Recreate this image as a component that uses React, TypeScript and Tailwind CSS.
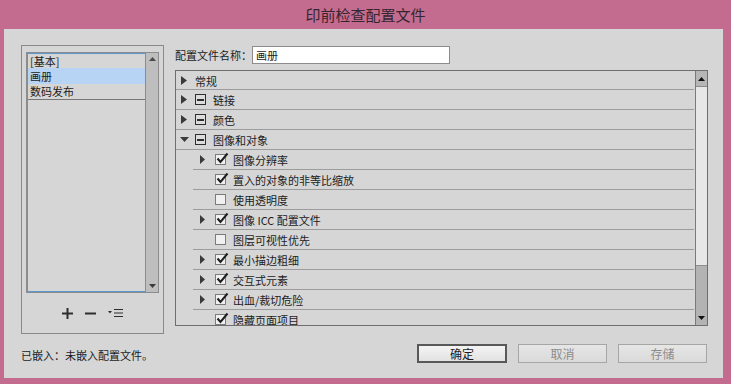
import React from "react";

const RightTri = ({ w = 6, h = 9 }: { w?: number; h?: number }) => (
  <svg width={w} height={h} viewBox={`0 0 ${w} ${h}`}>
    <polygon points={`0,0 ${w},${h / 2} 0,${h}`} fill="#3a3a3a" />
  </svg>
);

const DownTri = () => (
  <svg width={9} height={5} viewBox="0 0 9 5">
    <polygon points="0,0 9,0 4.5,5" fill="#3a3a3a" />
  </svg>
);

const MinusBox = () => (
  <div className="w-[11px] h-[11px] border border-[#2e2e2e] flex items-center justify-center bg-[#dcdcdc]">
    <div className="w-[7px] h-[2px] bg-[#2e2e2e]" />
  </div>
);

const CheckBox = ({ checked }: { checked: boolean }) => (
  <div className="relative w-[11px] h-[11px] border border-[#7b7b7b] bg-[#f0f0f0]">
    {checked && (
      <svg className="absolute left-[0px] top-[-3px]" width={13} height={13} viewBox="0 0 13 13">
        <polyline points="1.5,6.5 4.5,10 11.5,1.5" fill="none" stroke="#1e1e1e" strokeWidth={2} />
      </svg>
    )}
  </div>
);

type Top = { kind: "top"; label: string; box: boolean; open?: boolean; first?: boolean };
type Child = { kind: "child"; label: string; tri: boolean; checked: boolean };

const rows: (Top | Child)[] = [
  { kind: "top", label: "常规", box: false, first: true },
  { kind: "top", label: "链接", box: true },
  { kind: "top", label: "颜色", box: true },
  { kind: "top", label: "图像和对象", box: true, open: true },
  { kind: "child", label: "图像分辨率", tri: true, checked: true },
  { kind: "child", label: "置入的对象的非等比缩放", tri: false, checked: true },
  { kind: "child", label: "使用透明度", tri: false, checked: false },
  { kind: "child", label: "图像 ICC 配置文件", tri: true, checked: true },
  { kind: "child", label: "图层可视性优先", tri: false, checked: false },
  { kind: "child", label: "最小描边粗细", tri: true, checked: true },
  { kind: "child", label: "交互式元素", tri: true, checked: true },
  { kind: "child", label: "出血/裁切危险", tri: true, checked: true },
  { kind: "child", label: "隐藏页面项目", tri: false, checked: true },
];

export default function App() {
  return (
    <div className="w-[731px] h-[384px] bg-[#c36c90] flex flex-col overflow-hidden font-['Noto_Sans_CJK_SC',sans-serif] text-[11px] text-[#1c1c1c] leading-none">
      <div className="h-[29px] flex items-center justify-center text-[15px] text-[#35252e]">
        印前检查配置文件
      </div>
      <div className="ml-[4px] w-[719px] h-[349px] bg-[#d6d6d6] flex flex-col">
        <div className="flex pl-[17px] pt-[16px]">
          {/* left group */}
          <div className="w-[143px] h-[289px] border border-[#8a8a8a] flex flex-col pl-[4px] pt-[6px]">
            <div className="w-[133px] h-[241px] border border-[#8c8c8c] flex">
              <div className="flex-1 border border-[#5c98cd] flex flex-col">
                <div className="h-[14px] flex items-center pl-[2px]">[基本]</div>
                <div className="h-[16px] flex items-center pl-[2px] bg-[#b8d4f4]">画册</div>
                <div className="h-[16px] flex items-center pl-[2px] border-b border-[#777777]">数码发布</div>
              </div>
              <div className="w-[12px] bg-[#bebebe] flex flex-col items-center justify-between py-[4px]">
                <svg width={7} height={4} viewBox="0 0 7 4">
                  <polygon points="0,4 7,4 3.5,0" fill="#4a4a4a" />
                </svg>
                <svg width={7} height={4} viewBox="0 0 7 4">
                  <polygon points="0,0 7,0 3.5,4" fill="#3a3a3a" />
                </svg>
              </div>
            </div>
            <div className="flex-1 flex items-center pl-[36px] gap-[12px]">
              <svg width={11} height={11} viewBox="0 0 11 11">
                <rect x="0" y="4.5" width="11" height="2" fill="#2e2e2e" />
                <rect x="4.5" y="0" width="2" height="11" fill="#2e2e2e" />
              </svg>
              <svg width={11} height={11} viewBox="0 0 11 11">
                <rect x="0" y="4.5" width="11" height="2" fill="#2e2e2e" />
              </svg>
              <svg width={15} height={11} viewBox="0 0 15 11">
                <polygon points="0,3 4,3 2,5.5" fill="#2e2e2e" />
                <rect x="6" y="1" width="9" height="1" fill="#2e2e2e" />
                <rect x="6" y="4.5" width="9" height="1" fill="#2e2e2e" />
                <rect x="6" y="8" width="9" height="1" fill="#2e2e2e" />
              </svg>
            </div>
          </div>

          {/* right column */}
          <div className="ml-[11px] w-[533px] mt-[1px] flex flex-col">
            <div className="h-[18px] flex items-center">
              <div className="w-[77px]">配置文件名称：</div>
              <div className="w-[198px] h-[18px] bg-white border border-[#8c8c8c] flex items-center pl-[3px]">
                画册
              </div>
            </div>
            <div className="mt-[6px] h-[256px] border border-[#6e6e6e] flex overflow-hidden">
              <div className="flex-1 flex flex-col overflow-hidden pr-[1px]">
                {rows.map((r, i) =>
                  r.kind === "top" ? (
                    <div
                      key={i}
                      className={`${r.first ? "h-[19px]" : "h-[20px]"} shrink-0 border-b border-[#9c9c9c] flex items-center pl-[4px]`}
                    >
                      <div className="w-[15px] flex items-center">
                        {r.open ? <DownTri /> : <span className="ml-[1px] flex"><RightTri /></span>}
                      </div>
                      {r.box && (
                        <div className="w-[18px] flex items-center">
                          <MinusBox />
                        </div>
                      )}
                      <span className="translate-y-[1px]">{r.label}</span>
                    </div>
                  ) : (
                    <div
                      key={i}
                      className="h-[20px] shrink-0 ml-[17px] border-b border-[#9c9c9c] flex items-center pl-[7px]"
                    >
                      <div className="w-[15px] flex items-center">{r.tri && <RightTri w={5} h={9} />}</div>
                      <div className="w-[18px] flex items-center">
                        <CheckBox checked={r.checked} />
                      </div>
                      <span className="translate-y-[1px]">{r.label}</span>
                    </div>
                  )
                )}
              </div>
              <div className="w-[12px] border-l border-[#7a7a7a] flex flex-col">
                <div className="h-[16px] bg-[#b6b6b6] border-b border-[#8a8a8a] flex items-center justify-center">
                  <svg width={7} height={4} viewBox="0 0 7 4">
                    <polygon points="0,4 7,4 3.5,0" fill="#111" />
                  </svg>
                </div>
                <div className="flex-1 bg-[#e7e7e7]" />
                <div className="h-[47px] bg-[#b3b3b3] border-t border-[#8e8e8e]" />
                <div className="h-[13px] bg-[#b3b3b3] flex items-start justify-center pt-[4px]">
                  <svg width={7} height={4} viewBox="0 0 7 4">
                    <polygon points="0,0 7,0 3.5,4" fill="#111" />
                  </svg>
                </div>
              </div>
            </div>
          </div>
        </div>

        {/* bottom row */}
        <div className="mt-[10px] flex items-center pl-[17px] pr-[16px]">
          <div className="mt-[3px]">已嵌入：未嵌入配置文件。</div>
          <div className="ml-auto flex items-center">
            <div className="w-[90px] h-[19px] border-2 border-[#585858] bg-gradient-to-b from-[#f4f4f4] to-[#e2e2e2] flex items-center justify-center text-[12px] text-[#1c1c1c]">
              确定
            </div>
            <div className="ml-[11px] w-[89px] h-[19px] border border-[#a6a6a6] bg-gradient-to-b from-[#e6e6e6] to-[#dadada] flex items-center justify-center text-[12px] text-[#8c8c8c]">
              取消
            </div>
            <div className="ml-[11px] w-[89px] h-[19px] border border-[#a6a6a6] bg-gradient-to-b from-[#e6e6e6] to-[#dadada] flex items-center justify-center text-[12px] text-[#8c8c8c]">
              存储
            </div>
          </div>
        </div>
      </div>
    </div>
  );
}
